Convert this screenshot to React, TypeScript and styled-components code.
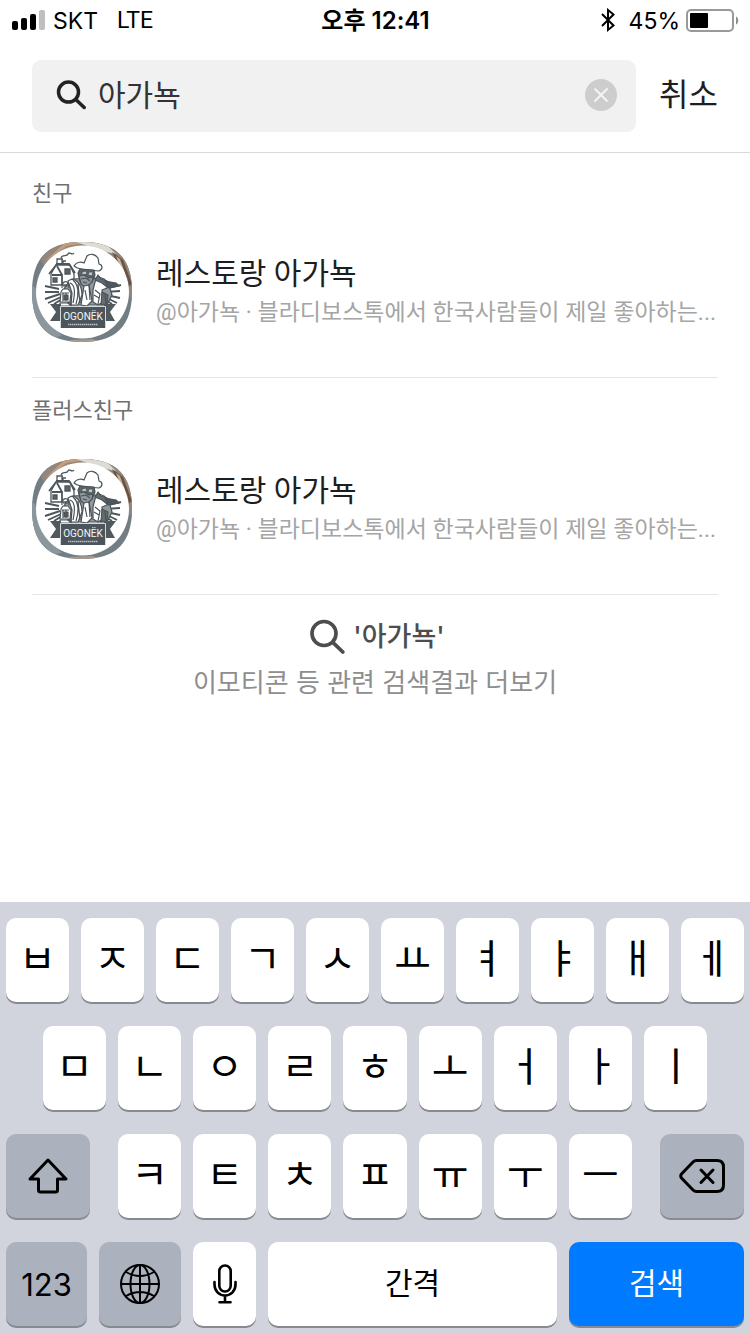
import React from "react";
import styled, { createGlobalStyle, css } from "styled-components";

const GlobalStyle = createGlobalStyle`
  *, *::before, *::after { box-sizing: border-box; }
  body {
    margin: 0;
    background: #fff;
    font-family: Inter, "Noto Sans CJK KR", sans-serif;
  }
  button, input { font-family: inherit; }
`;

const Screen = styled.div`
  min-height: 100vh;
  display: flex;
  flex-direction: column;
  background: #fff;
  color: #222;
`;

const StatusBar = styled.div`
  display: grid;
  grid-template-columns: 1fr auto 1fr;
  align-items: center;
  height: 42px;
  padding: 0 11px 0 12px;
  font-size: 23px;
  line-height: 42px;
  color: #000;
`;

const Carrier = styled.div`
  display: flex;
  align-items: center;
  gap: 8px;
`;

const Network = styled.span`
  margin-left: 11px;
  font-family: Roboto, sans-serif;
`;

const Clock = styled.time`
  font-size: 24px;
  font-weight: 600;
`;

const Power = styled.div`
  display: flex;
  align-items: center;
  justify-content: flex-end;
  gap: 6px;
`;

const BluetoothMark = styled.svg`
  margin-right: 8px;
`;

const Header = styled.form`
  display: flex;
  align-items: center;
  gap: 13px;
  padding: 18px 22px 20px 32px;
  border-bottom: 1px solid #d9d9d9;
`;

const SearchBox = styled.label`
  flex: 1;
  min-width: 0;
  height: 72px;
  display: flex;
  align-items: center;
  gap: 12px;
  padding: 0 19px 2px 24px;
  border-radius: 9px;
  background: #f1f1f1;
`;

const SearchInput = styled.input`
  flex: 1;
  min-width: 0;
  height: 44px;
  padding: 0 0 4px;
  border: 0;
  outline: 0;
  background: transparent;
  color: #333;
  font-size: 30px;
`;

const ClearButton = styled.button`
  display: flex;
  padding: 0;
  border: 0;
  background: none;
`;

const CancelButton = styled.button`
  padding: 0 10px 2px;
  border: 0;
  background: none;
  color: #1e1e1e;
  font-size: 32px;
  line-height: 44px;
`;

const Results = styled.main`
  flex: 1;
  padding: 8px 32px 0;
`;

const Section = styled.section`
  padding: 16px 0 35px;
  border-bottom: 1px solid #e5e5e5;
`;

const SectionTitle = styled.h2`
  margin: 0 0 33px;
  font-size: 22px;
  font-weight: 400;
  line-height: 32px;
  color: #707070;
`;

const FriendLink = styled.a`
  display: flex;
  align-items: center;
  gap: 24px;
  color: inherit;
  text-decoration: none;
`;

const AvatarImage = styled.svg`
  flex: none;
  width: 100px;
  height: 100px;
`;

const FriendText = styled.div`
  flex: 1;
  min-width: 0;
  padding-bottom: 2px;
  font-family: Roboto, "Noto Sans CJK KR", sans-serif;
`;

const FriendName = styled.div`
  font-size: 30px;
  line-height: 44px;
  color: #1e1e1e;
`;

const FriendInfo = styled.div`
  font-size: 23px;
  line-height: 34px;
  color: #a5a5a5;
  white-space: nowrap;
`;

const MoreLink = styled.a`
  display: flex;
  flex-direction: column;
  align-items: center;
  gap: 2px;
  padding: 20px 0;
  color: #8e8e8e;
  font-size: 26px;
  line-height: 44px;
  text-decoration: none;
`;

const MoreQuery = styled.span`
  display: flex;
  align-items: center;
  gap: 8px;
  padding-left: 4px;
  color: #4d4d4d;
  font-size: 27px;
  font-weight: 500;
`;

const Keyboard = styled.div`
  display: flex;
  flex-direction: column;
  gap: 24px;
  padding: 16px 6px 8px;
  background: #d1d4dc;
`;

const KeyRow = styled.div<{ $inset?: boolean; $wide?: boolean }>`
  display: flex;
  gap: ${(p) => (p.$wide ? 28 : 12)}px;
  padding: 0 ${(p) => (p.$inset ? "5%" : "0")};
`;

const KeyGroup = styled.div`
  flex: 514 1 0;
  display: flex;
  gap: 12px;
`;

type Tone = "light" | "dark" | "action";

const tones = {
  light: css`background: #fff; color: #000;`,
  dark: css`background: #abb2bd; color: #000;`,
  action: css`background: #007aff; color: #fff;`,
};

const Key = styled.button<{ $grow?: number; $tone?: Tone }>`
  flex: ${(p) => p.$grow ?? 63} 1 0;
  min-width: 0;
  height: 84px;
  display: flex;
  align-items: center;
  justify-content: center;
  padding: 0;
  border: 0;
  border-radius: 10px;
  box-shadow: 0 2px 0 #888a8f;
  font-size: 31px;
  ${(p) => tones[p.$tone ?? "light"]}
`;

const WordKey = styled(Key)`
  padding-bottom: 6px;
  font-size: 30px;
`;

const JamoKey = styled(Key)`
  padding-bottom: 8px;
  font-family: "Noto Sans CJK KR", sans-serif;
  font-size: 40px;
  line-height: 76px;
`;

const Magnifier = ({ size, stroke, label }: { size: number; stroke: number; label?: string }) => (
  <svg width={size} height={size} viewBox="0 0 36 36" fill="none" stroke="currentColor"
    strokeWidth={stroke} aria-label={label} aria-hidden={!label}>
    <circle cx="15" cy="14.5" r="12" />
    <path d="M23.800 23.300 33.800 33" strokeLinecap="round" />
  </svg>
);

const Avatar = ({ id }: { id: string }) => (
  <AvatarImage viewBox="0 0 100 100" role="img" aria-label="OGONЁK">
    <defs>
      <clipPath id={id}>
        <path d="M50 0C84 0 100 16 100 50S84 100 50 100 0 84 0 50 16 0 50 0Z" />
      </clipPath>
    </defs>
    <g clipPath={`url(#${id})`}>
      <rect width="100" height="100" fill="#727d84" />
      <path d="M0 0H100V60L90 35 70 8H40L12 24Z" fill="#91877d" />
      <path d="M12 20 35 4 62 0 38 -4Z" fill="#c69c7b" />
      <path d="M44 0H72L84 12 70 9Z" fill="#dcdcd4" />
      <path d="M80 10 91 18 100 42 96 45Z" fill="#6b5143" />
      <path d="M84 14 88 17 93 31 91 32Z" fill="#c5b393" />
      <path d="M0 42 5 48 12 76 30 94 18 96 0 76Z" fill="#8c979d" />
      <path d="M38 98 60 97 70 100H36Z" fill="#a59a8c" />
      <circle cx="50.5" cy="50" r="46.5" fill="#fff" />
      <g stroke="#4d565b" strokeWidth="1.3" fill="none">
        <path d="M13 44 27 47M13 50 27 50M13 57 28 52M16 61 29 55M22 62 30 57M72 47 89 43M73 50 88 49M74 53 88 56M73 55 85 61M72 57 80 62" strokeWidth="1.9" />
        <path d="M19 32 24 23 38 23 42 32V43H19Z" fill="#fff" />
        <path d="M17 32 25 22M24 22 37 22 43 31M20 33H30V43M30 33 25 24" strokeWidth="1.8" />
        <path d="M25 23V17H30V23M25 17H31M31 23V19H34" />
        <path d="M21 36H25V40H21ZM33 27H38V32H33Z" fill="#5b646a" />
        <path d="M29 16C30 12 35 15 36 12S40 14 42 11" />
      </g>
      <g stroke="#4a5358" strokeWidth="1.2" fill="#fff" strokeLinejoin="round">
        <path d="M40 37C35 42 30 47 31 55L38 63H75L80 53 77 43 65 36Z" fill="#929a9e" />
        <path d="M42 24C45 19 50 20 52 21L55 14C58 11 63 12 66 16L67 22C71 23 71 27 67 29 58 28 48 29 42 24Z" />
        <path d="M48 27 46 31 48 39 53 43 60 40 63 33 62 28Z" fill="#5b6469" />
        <path d="M50 30 54 29 55 32 50 33ZM57 30 61 30 60 34 56 33Z" strokeWidth=".8" fill="#c3c8ca" />
        <path d="M47 34 52 33 57 36 61 35 60 40 54 46 49 42Z" fill="#8f979b" />
        <path d="M49 37 54 36 58 39M51 40 55 41" fill="none" />
        <path d="M36 39C43 34 50 42 50 53L46 63H39L40 51Z" />
        <path d="M38 41C44 43 43 52 41 61M41 38C47 43 47 53 44 62M46 42 48 61" fill="none" />
        <path d="M52 44 57 43 60 59 55 64 49 63Z" />
        <path d="M53 48 55 58M57 43 58 58" fill="none" />
        <path d="M63 40 67 35 72 37 76 41 75 46 70 48 71 60 66 63 61 60 61 48Z" />
        <path d="M63 38 66 33 69 37 75 39 78 43 75 45 70 41ZM70 50 76 53 75 62 69 63Z" fill="#626c71" />
        <path d="M63 48 68 52 66 62M62 53 67 56M73 52 74 62" fill="none" />
        <path d="M73 39 84 41 87 44 76 46Z" fill="#4e575c" />
        <path d="M29 50 31 47H36L39 51 38 60H28Z" />
        <path d="M30 46C29 38 38 37 37 46M30 51H37M31 51V59M34 51V59M28 61H39V64H28ZM31 44H37" fill="none" />
        <path d="M32 53H36V58H32Z" fill="#505a60" />
      </g>
      <path d="M18 62H29V79H18L24 70ZM72 62H84L78 70 83 79H72Z" fill="#50595e" />
      <path d="M28 64H74V86H28Z" fill="#4c555b" />
      <path d="M28.500 86V64.500H73.500V86" stroke="#d5d8d9" strokeWidth="1" fill="none" />
      <text x="51" y="78" textAnchor="middle" fill="#f4f6f6" fontFamily="Liberation Sans Narrow, Roboto, sans-serif" fontSize="10">OGONЁK</text>
      <path d="M36 82.500H66" stroke="#b9bec1" strokeWidth="1.4" strokeDasharray="1 .5 2 .5" />
    </g>
  </AvatarImage>
);

const sections = [
  { id: "friends", title: "친구" },
  { id: "plus-friends", title: "플러스친구" },
];

const topKeys = [..."ㅂㅈㄷㄱㅅㅛㅕㅑㅐㅔ"];
const middleKeys = [..."ㅁㄴㅇㄹㅎㅗㅓㅏㅣ"];
const bottomKeys = [..."ㅋㅌㅊㅍㅠㅜㅡ"];

const letters = (keys: string[]) =>
  keys.map((k) => <JamoKey key={k} type="button">{k}</JamoKey>);

export default function App() {
  const [query, setQuery] = React.useState("아가뇩");

  return (
    <Screen>
      <GlobalStyle />
      <StatusBar>
        <Carrier>
          <svg width="33" height="22" viewBox="0 0 33 22" aria-hidden="true">
            <rect y="11" width="6" height="9" rx="2" />
            <rect x="9" y="8" width="6" height="12" rx="2" />
            <rect x="18" y="4" width="6" height="16" rx="2" />
            <rect x="27" width="6" height="20" rx="2" fill="#bfbfbf" />
          </svg>
          <span>SKT</span>
          <Network>LTE</Network>
        </Carrier>
        <Clock>오후 12:41</Clock>
        <Power>
          <BluetoothMark width="14" height="26" viewBox="0 0 14 26" fill="none" stroke="#000" strokeWidth="2" aria-label="Bluetooth">
            <path d="M1 6 12.500 17.500 7 22V2L12.500 6.500 1 18" />
          </BluetoothMark>
          <span>45%</span>
          <svg width="53" height="24" viewBox="0 0 53 24" aria-hidden="true">
            <rect x="1" y="1" width="46" height="21" rx="4" fill="none" stroke="#999" strokeWidth="2" />
            <rect x="4" y="4" width="18" height="15" rx="1" />
            <path d="M50 7.500C53 8.500 53 14.500 50 15.500Z" fill="#8e8e8e" />
          </svg>
        </Power>
      </StatusBar>

      <Header role="search" onSubmit={(e) => e.preventDefault()}>
        <SearchBox>
          <Magnifier size={30} stroke={4.2} label="검색" />
          <SearchInput value={query} onChange={(e) => setQuery(e.target.value)} />
          <ClearButton type="button" aria-label="지우기" onClick={() => setQuery("")}>
            <svg width="32" height="32" viewBox="0 0 32 32" fill="none">
              <circle cx="16" cy="16" r="16" fill="#cdcdcd" />
              <path d="M9.500 9.500 22.500 22.500M22.500 9.500 9.500 22.500" stroke="#f5f5f5" strokeWidth="2" />
            </svg>
          </ClearButton>
        </SearchBox>
        <CancelButton type="button">취소</CancelButton>
      </Header>

      <Results>
        {sections.map((s) => (
          <Section key={s.id}>
            <SectionTitle>{s.title}</SectionTitle>
            <FriendLink href={`#${s.id}`}>
              <Avatar id={`avatar-${s.id}`} />
              <FriendText>
                <FriendName>레스토랑 아가뇩</FriendName>
                <FriendInfo>@아가뇩 · 블라디보스톡에서 한국사람들이 제일 좋아하는...</FriendInfo>
              </FriendText>
            </FriendLink>
          </Section>
        ))}
        <MoreLink href="#more">
          <MoreQuery>
            <Magnifier size={36} stroke={3.7} />
            '아가뇩'
          </MoreQuery>
          이모티콘 등 관련 검색결과 더보기
        </MoreLink>
      </Results>

      <Keyboard>
        <KeyRow>{letters(topKeys)}</KeyRow>
        <KeyRow $inset>{letters(middleKeys)}</KeyRow>
        <KeyRow $wide>
          <Key type="button" $grow={84} $tone="dark" aria-label="Shift">
            <svg width="40" height="36" viewBox="0 0 40 36" fill="none" stroke="#000" strokeWidth="3" strokeLinejoin="round">
              <path d="M20 2 38 21H29.500V32Q29.500 34 27.500 34H12.500Q10.500 34 10.500 32V21H2Z" />
            </svg>
          </Key>
          <KeyGroup>{letters(bottomKeys)}</KeyGroup>
          <Key type="button" $grow={84} $tone="dark" aria-label="Backspace">
            <svg width="46" height="34" viewBox="0 0 46 34" fill="none" stroke="#000" strokeWidth="3" strokeLinejoin="round" strokeLinecap="round">
              <path d="M17.500 1.500H38Q44.500 1.500 44.500 8V26Q44.500 32.500 38 32.500H17.500Q15.500 32.500 14 31L2.500 19Q1 17 2.500 15L14 3Q15.500 1.500 17.500 1.500Z" />
              <path d="M22 11 34 23.500M34 11 22 23.500" />
            </svg>
          </Key>
        </KeyRow>
        <KeyRow>
          <Key type="button" $grow={81} $tone="dark">123</Key>
          <Key type="button" $grow={82} $tone="dark" aria-label="Globe">
            <svg width="40" height="40" viewBox="0 0 40 40" fill="none" stroke="#000" strokeWidth="2">
              <circle cx="20" cy="20" r="19" />
              <ellipse cx="20" cy="20" rx="9.500" ry="19" />
              <path d="M20 1V39M1 20H39M6 8Q20 16 34 8M6 32Q20 24 34 32" />
            </svg>
          </Key>
          <Key type="button" aria-label="Dictation">
            <svg width="24" height="40" viewBox="0 0 24 40" fill="none" stroke="#000" strokeWidth="2.600" strokeLinecap="round">
              <rect x="6.300" y="1.500" width="11.400" height="26" rx="5.700" />
              <path d="M1.500 18V20.500C1.500 27 6 31.500 12 31.500S22.500 27 22.500 20.500V18M12 32V38M6.500 38.300H17.500" />
            </svg>
          </Key>
          <WordKey type="button" $grow={289}>간격</WordKey>
          <WordKey type="button" $grow={175} $tone="action">검색</WordKey>
        </KeyRow>
      </Keyboard>
    </Screen>
  );
}
